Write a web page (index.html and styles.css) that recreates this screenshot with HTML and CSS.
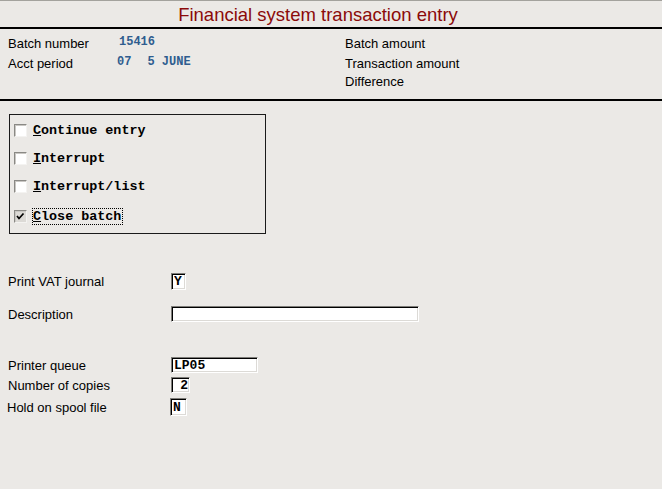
FILE: index.html
```html
<!DOCTYPE html>
<html lang="en">
<head>
    <meta charset="UTF-8">
    <meta name="viewport" content="width=device-width, initial-scale=1.0">
    <title>Financial system transaction entry</title>
    <link rel="stylesheet" href="styles.css">
</head>
<body>
    <div class="title">Financial system transaction entry</div>

    <div class="summary">
        <div class="summary-col summary-left">
            <div class="field">
                <span class="label">Batch number</span>
                <span class="value batch">15416</span>
            </div>
            <div class="field">
                <span class="label">Acct period</span>
                <span class="value">07</span>
                <span class="value period">5 JUNE</span>
            </div>
        </div>
        <div class="summary-col summary-right">
            <div class="label">Batch amount</div>
            <div class="label">Transaction amount</div>
            <div class="label label-short">Difference</div>
        </div>
    </div>

    <div class="options">
        <label class="option">
            <span class="check"></span>
            <span class="option-text"><u>C</u>ontinue entry</span>
        </label>
        <label class="option">
            <span class="check"></span>
            <span class="option-text"><u>I</u>nterrupt</span>
        </label>
        <label class="option">
            <span class="check"></span>
            <span class="option-text"><u>I</u>nterrupt/list</span>
        </label>
        <label class="option option-last focused">
            <span class="check checked">
                <svg width="11" height="11" viewBox="0 0 11 11">
                    <polyline points="2,5 4,7.5 8.5,2.5" fill="none" stroke="#000" stroke-width="1.7"/>
                </svg>
            </span>
            <span class="option-text"><u>C</u>lose batch</span>
        </label>
    </div>

    <div class="form">
        <div class="form-row row-vat">
            <span class="label">Print VAT journal</span>
            <input class="box box-vat" type="text" value="Y">
        </div>
        <div class="form-row row-desc">
            <span class="label">Description</span>
            <input class="box box-desc" type="text" value="">
        </div>
        <div class="form-row row-queue">
            <span class="label">Printer queue</span>
            <input class="box box-queue" type="text" value="LP05">
        </div>
        <div class="form-row row-copies">
            <span class="label">Number of copies</span>
            <input class="box box-copies" type="text" value="2">
        </div>
        <div class="form-row row-hold">
            <span class="label">Hold on spool file</span>
            <input class="box box-hold" type="text" value="N">
        </div>
    </div>
</body>
</html>
```

FILE: styles.css
```css
body {
    margin: 0;
    background-color: #ebe9e6;
    border-top: 1px solid #a3a29d;
    font-family: "Liberation Sans", Arial, sans-serif;
    font-size: 13px;
    color: #000;
    height: 488px;
    overflow: hidden;
}
.title {
    height: 24px;
    padding-top: 2px;
    padding-right: 26px;
    line-height: 24px;
    text-align: center;
    font-size: 18.5px;
    color: #8b0a0a;
}
.summary {
    display: flex;
    height: 70px;
    border-top: 2px solid #000;
    border-bottom: 2px solid #000;
}
.summary-col {
    padding-top: 5px;
}
.summary-left {
    width: 345px;
    padding-left: 8px;
    box-sizing: border-box;
}
.field {
    display: flex;
    height: 20px;
}
.label {
    line-height: 20px;
    white-space: nowrap;
}
.label-short {
    line-height: 16px;
}
.field .label {
    width: 109px;
}
.value {
    font-family: "Liberation Mono", "Courier New", monospace;
    font-weight: bold;
    font-size: 12px;
    line-height: 17px;
    color: #2f5d8f;
}
.batch {
    padding-left: 2px;
}
.period {
    margin-left: 16px;
}
.options {
    width: 257px;
    margin: 13px 0 0 9px;
    padding: 1px 0 3px 4px;
    border: 1px solid #1a1a1a;
    box-sizing: border-box;
    height: 120px;
}
.option {
    display: flex;
    align-items: center;
    height: 28px;
}
.option-last {
    margin-top: 2px;
}
.check {
    width: 13px;
    height: 13px;
    box-sizing: border-box;
    background-color: #fff;
    border: 1px solid;
    border-color: #8a8985 #f4f3f1 #f4f3f1 #8a8985;
    box-shadow: inset 1px 1px 0 #c9c7c3;
    display: flex;
    align-items: center;
    justify-content: center;
}
.check.checked {
    background-color: #dcdad6;
}
.option-text {
    margin-left: 5px;
    padding: 0 1px 0 0;
    border: 1px dotted transparent;
    font-family: "Liberation Mono", "Courier New", monospace;
    font-weight: bold;
    font-size: 13.4px;
    line-height: 15px;
}
.focused .option-text {
    border-color: #000;
}
.form-row {
    display: flex;
    align-items: center;
    padding-left: 8px;
}
.form-row .label {
    width: 163px;
    line-height: 15px;
}
.box {
    box-sizing: border-box;
    margin: 0;
    padding: 0 1px 0 2px;
    height: 16px;
    background-color: #fff;
    border: 1px solid;
    border-color: #7d7c78 #fff #fff #7d7c78;
    box-shadow: inset 1px 1px 0 #000, inset -1px -1px 0 #dcdad6;
    font-family: "Liberation Mono", "Courier New", monospace;
    font-weight: bold;
    font-size: 13px;
    color: #000;
    outline: none;
}
.row-vat {
    margin-top: 39px;
    height: 17px;
}
.box-vat {
    width: 15px;
    height: 17px;
}
.row-desc {
    margin-top: 16px;
    height: 16px;
}
.box-desc {
    width: 248px;
}
.row-queue {
    margin-top: 35px;
    height: 16px;
}
.box-queue {
    width: 87px;
}
.row-copies {
    margin-top: 4px;
    height: 16px;
}
.box-copies {
    width: 19px;
    text-align: right;
}
.row-hold {
    margin-top: 5px;
    height: 18px;
    padding-left: 7px;
}
.box-hold {
    width: 17px;
    height: 18px;
}
```
